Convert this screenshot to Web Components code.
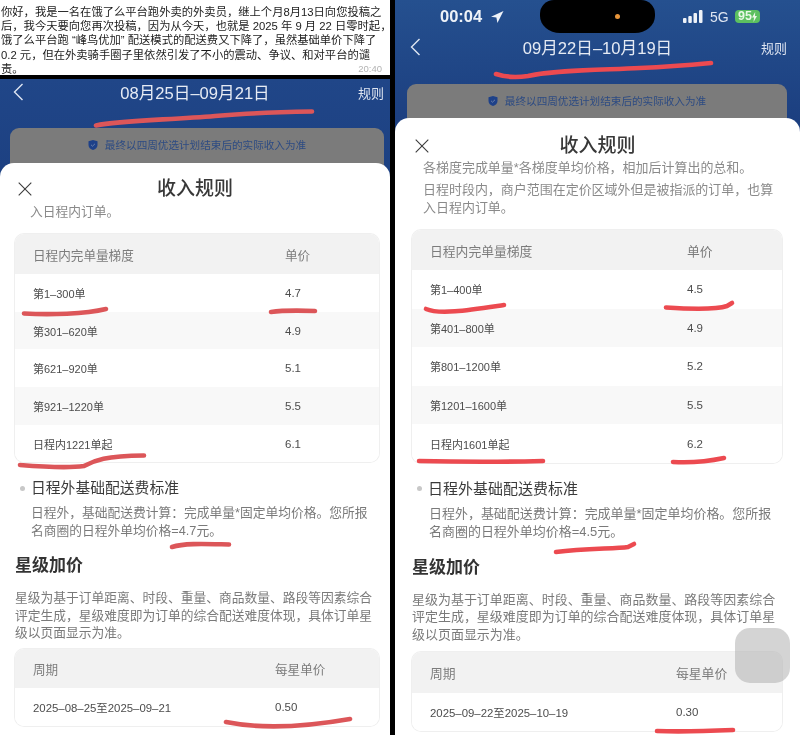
<!doctype html>
<html lang="zh">
<head>
<meta charset="utf-8">
<title>收入规则</title>
<style>
  html, body { margin: 0; background: #000; }
  body {
    width: 800px; height: 735px; overflow: hidden;
    display: grid; grid-template-columns: 390px 405px; gap: 5px;
    font-family: "Liberation Sans", "Noto Sans CJK SC", sans-serif;
  }
  .col { display: flex; flex-direction: column; height: 735px; min-width: 0; filter: blur(.35px); }
  /* each shot has its own scale, so spacing is set per panel */
  #left { --body: 12.75px; --th: 12.6px; --td: 11px; --h3: 14.8px; --pad-l: 15px; --pad-r: 11px; --x-l: 18px; --back-l: 13px; --rules-r: 6px; --banner-l: 10px; --banner-r: 6px; --ink: #dc5659; --top-blue: #204688; }
  #right { --body: 12.97px; --th: 12.8px; --td: 11px; --h3: 15px; --pad-l: 17px; --pad-r: 18px; --x-l: 20px; --back-l: 15px; --rules-r: 13px; --banner-l: 12px; --banner-r: 13px; --ink: #ec4a50; --top-blue: #25508f; }
  rule-table rule-row[head] { --h: 40px; }
  .date { --td: 11.4px; }
</style>
</head>
<body>

<div class="col" id="left">
  <note-card time="20:40">
    你好，我是一名在饿了么平台跑外卖的外卖员，继上个月8月13日向您投稿之<br>
    后，我今天要向您再次投稿，因为从今天，也就是 2025 年 9 月 22 日零时起，<br>
    饿了么平台跑 “峰鸟优加” 配送模式的配送费又下降了，虽然基础单价下降了<br>
    0.2 元，但在外卖骑手圈子里依然引发了不小的震动、争议、和对平台的谴<br>
    <span slot="last">责。</span>
  </note-card>
  <rule-phone style="--banner-top:23px;--banner-h:50px;--sheet-pad:14px">
    <app-header style="--title:16.600px">08月25日–09月21日</app-header>
    <notice-banner>最终以四周优选计划结束后的实际收入为准</notice-banner>
    <rule-sheet>
      <rule-para style="margin:2px 0 0 15px;--lh:17px;color:#8a8a8a">入日程内订单。</rule-para>
      <rule-table style="margin-top:14px;--col:270px">
        <rule-row head><span>日程内完单量梯度</span><span>单价</span></rule-row>
        <rule-row><span>第1–300单</span><span>4.7</span></rule-row>
        <rule-row><span>第301–620单</span><span>4.9</span></rule-row>
        <rule-row><span>第621–920单</span><span>5.1</span></rule-row>
        <rule-row><span>第921–1220单</span><span>5.5</span></rule-row>
        <rule-row><span>日程内1221单起</span><span>6.1</span></rule-row>
      </rule-table>
      <bullet-title style="margin:16px 0 0 5px">日程外基础配送费标准</bullet-title>
      <rule-para style="margin:6px 0 0 16px;--lh:17.3px">日程外，基础配送费计算：完成单量*固定单均价格。您所报<br>名商圈的日程外单均价格=4.7元。</rule-para>
      <section-title style="margin-top:15px">星级加价</section-title>
      <rule-para style="margin-top:11px;--lh:17.5px">星级为基于订单距离、时段、重量、商品数量、路段等因素综合<br>评定生成，星级难度即为订单的综合配送难度体现，具体订单星<br>级以页面显示为准。</rule-para>
      <rule-table class="date" style="margin-top:7.5px;--col:260px">
        <rule-row head style="--h:39px"><span>周期</span><span>每星单价</span></rule-row>
        <rule-row style="--h:38px"><span>2025–08–25至2025–09–21</span><span>0.50</span></rule-row>
      </rule-table>
    </rule-sheet>
    <ink-marks slot="over" view="0 79 390 656" d="M96 125.500C120 120 170 120 215 116C250 113 285 112 312 111.500|M24 313.500C50 315 85 314 106 309|M271 312C285 310 300 310.500 315 311|M20 465C45 467 70 468 84 466C95 460 105 456 144 455.500|M172 547C185 543 205 544 229 544.500|M226 722C265 730 310 726 350 719"></ink-marks>
  </rule-phone>
</div>

<div class="col" id="right">
  <rule-phone style="--banner-top:24px;--banner-h:49px;--sheet-pad:16px">
    <status-bar></status-bar>
    <app-header style="--title:16.600px;margin-top:1px">09月22日–10月19日</app-header>
    <notice-banner>最终以四周优选计划结束后的实际收入为准</notice-banner>
    <rule-sheet>
      <rule-para style="margin:1px 0 0 11px;--lh:18px;color:#8a8a8a">各梯度完成单量*各梯度单均价格，相加后计算出的总和。</rule-para>
      <rule-para style="margin:4px 0 0 11px;--lh:18px;color:#8a8a8a">日程时段内，商户范围在定价区域外但是被指派的订单，也算<br>入日程内订单。</rule-para>
      <rule-table style="margin-top:13px;--col:275px">
        <rule-row head><span>日程内完单量梯度</span><span>单价</span></rule-row>
        <rule-row style="--h:38.600px"><span>第1–400单</span><span>4.5</span></rule-row>
        <rule-row style="--h:38.600px"><span>第401–800单</span><span>4.9</span></rule-row>
        <rule-row style="--h:38.600px"><span>第801–1200单</span><span>5.2</span></rule-row>
        <rule-row style="--h:38.600px"><span>第1201–1600单</span><span>5.5</span></rule-row>
        <rule-row style="--h:38.600px"><span>日程内1601单起</span><span>6.2</span></rule-row>
      </rule-table>
      <bullet-title style="margin:16px 0 0 5px">日程外基础配送费标准</bullet-title>
      <rule-para style="margin:6px 0 0 17px;--lh:18px">日程外，基础配送费计算：完成单量*固定单均价格。您所报<br>名商圈的日程外单均价格=4.5元。</rule-para>
      <section-title style="margin-top:15px">星级加价</section-title>
      <rule-para style="margin-top:11px;--lh:17.5px">星级为基于订单距离、时段、重量、商品数量、路段等因素综合<br>评定生成，星级难度即为订单的综合配送难度体现，具体订单星<br>级以页面显示为准。</rule-para>
      <rule-table class="date" style="margin-top:8.500px;--col:264px">
        <rule-row head style="--h:41px"><span>周期</span><span>每星单价</span></rule-row>
        <rule-row style="--h:38px"><span>2025–09–22至2025–10–19</span><span>0.30</span></rule-row>
      </rule-table>
    </rule-sheet>
    <ink-marks slot="over" view="395 0 405 735" d="M496 74C505 77 515 78 528 76C555 70 600 70 640 68C665 67 690 65 711 63|M426 309C440 315 470 310 504 305|M666 307.500C690 309 715 310 727 306L732 303|M419 461C460 462 505 462 543 461|M673 462C690 463 710 461 724 458|M556 552C585 548 615 549 628 547L634 544|M657 731C680 732 710 731 733 730"></ink-marks>
    <float-button slot="over"></float-button>
  </rule-phone>
</div>

<script>
// chat bubble on top of the left shot
class NoteCard extends HTMLElement {
  constructor() {
    super();
    this.attachShadow({ mode: 'open' }).innerHTML = `
      <style>
        :host { display: block; height: 75px; margin-bottom: 4px; background: #fff; color: #1c1c1c; font-size: 11.300px; line-height: 14.200px; white-space: nowrap; overflow: hidden; box-sizing: border-box; padding: 5px 0 0 1px; }
        .last { display: flex; justify-content: space-between; padding-right: 8px; }
        .time { color: #b4b4b4; font-size: 9.500px; }
      </style>
      <slot></slot>
      <div class="last"><slot name="last"></slot><span class="time">${this.getAttribute('time')}</span></div>`;
  }
}

// blue app screen; "over" slot is for things floating above the page
class RulePhone extends HTMLElement {
  constructor() {
    super();
    this.attachShadow({ mode: 'open' }).innerHTML = `
      <style>
        :host { display: flex; flex-direction: column; flex: 1; min-height: 0; position: relative; overflow: hidden; background: linear-gradient(var(--top-blue), #1c3f80 120px); }
      </style>
      <slot></slot>
      <slot name="over"></slot>`;
  }
}

class StatusBar extends HTMLElement {
  constructor() {
    super();
    this.attachShadow({ mode: 'open' }).innerHTML = `
      <style>
        :host { display: flex; align-items: center; height: 33px; color: #eef2f8; position: relative; }
        .time { margin-left: 45px; font-size: 16.500px; font-weight: 700; width: 50px; }
        .island { margin-left: 36px; width: 115px; height: 33px; margin-top: -1px; background: #000; border-radius: 14px 14px 20px 20px / 14px 14px 17px 17px; display: flex; align-items: center; }
        .dot { width: 5px; height: 5px; margin-left: 75px; border-radius: 50%; background: #e8953a; }
        .bars { margin-left: 28px; }
        .net { margin-left: 7px; font-size: 14px; color: #dfe6f2; width: 18px; }
        .batt { margin-left: 7px; width: 25px; height: 13px; border-radius: 4px; background: #5cc060; color: #e9f7e6; font-size: 12.500px; font-weight: 700; line-height: 13px; display: flex; align-items: center; justify-content: center; }
      </style>
      <span class="time">00:04</span>
      <svg width="14" height="14" viewBox="0 0 14 14"><path d="M13.500 1L1 6.800L6.400 7.500L7.400 13Z" fill="#eef2f8"/></svg>
      <div class="island"><span class="dot"></span></div>
      <svg class="bars" width="20" height="13" viewBox="0 0 20 13" fill="#eef2f8"><rect x="0" y="8" width="3.500" height="5" rx="1"/><rect x="5.300" y="6" width="3.500" height="7" rx="1"/><rect x="10.500" y="3" width="3.500" height="10" rx="1"/><rect x="16" y="0" width="3.500" height="13" rx="1"/></svg>
      <span class="net">5G</span>
      <span class="batt">95<svg width="5" height="10" viewBox="0 0 5 10"><path d="M3.200 0L0 5.600H2L1.500 10L5 4H3Z" fill="#e9f7e6"/></svg></span>`;
  }
}

class AppHeader extends HTMLElement {
  constructor() {
    super();
    this.attachShadow({ mode: 'open' }).innerHTML = `
      <style>
        :host { display: grid; grid-template-columns: 1fr auto 1fr; align-items: center; height: 26px; color: #e6ebf4; flex: none; }
        .back { margin-left: var(--back-l); display: block; }
        .title { font-size: var(--title, 17px); white-space: nowrap; }
        .rules { justify-self: end; margin-right: var(--rules-r); font-size: 13px; color: #dde4f0; }
      </style>
      <svg class="back" width="11" height="18" viewBox="0 0 11 18"><path d="M9.500 1L1.500 9L9.500 17" fill="none" stroke="#dfe6f2" stroke-width="1.400"/></svg>
      <span class="title"><slot></slot></span>
      <span class="rules">规则</span>`;
  }
}

class NoticeBanner extends HTMLElement {
  constructor() {
    super();
    this.attachShadow({ mode: 'open' }).innerHTML = `
      <style>
        :host { display: flex; justify-content: center; gap: 7px; align-items: flex-start; flex: none; box-sizing: border-box; height: var(--banner-h); margin: var(--banner-top) var(--banner-r) 0 var(--banner-l); padding-top: 10px; border-radius: 9px 9px 0 0; background: #7b7b7b; color: #2d4b83; font-size: 10.600px; line-height: 14px; }
        svg { margin-top: 2px; }
      </style>
      <svg width="10" height="10" viewBox="0 0 10 10"><path d="M5 0L9.500 1.300V5C9.500 7.500 7.500 9.200 5 10C2.500 9.200 .5 7.500 .5 5V1.300Z" fill="#1e4189"/><path d="M3 4.800L4.500 6.200L7 3.800" fill="none" stroke="#7b8cb0" stroke-width=".8"/></svg>
      <span><slot></slot></span>`;
  }
}

// white bottom sheet with the close cross and title
class RuleSheet extends HTMLElement {
  constructor() {
    super();
    this.attachShadow({ mode: 'open' }).innerHTML = `
      <style>
        :host { display: block; flex: 1; min-height: 0; margin-top: -15px; background: #fff; border-radius: 14px 14px 0 0; overflow: hidden; color: #777; }
        .top { display: grid; grid-template-columns: 1fr auto 1fr; align-items: center; height: 24px; padding-top: var(--sheet-pad); }
        .top svg { margin-left: var(--x-l); display: block; }
        h2 { margin: 0; font-size: 19px; font-weight: 500; color: #383838; line-height: 24px; }
        .body { padding: 0 var(--pad-r) 0 var(--pad-l); }
      </style>
      <div class="top">
        <svg width="14" height="14" viewBox="0 0 14 14"><path d="M.7 .7L13.300 13.300M13.300 .7L.7 13.300" stroke="#3c3c3c" stroke-width="1.100" fill="none"/></svg>
        <h2>收入规则</h2>
      </div>
      <div class="body"><slot></slot></div>`;
  }
}

class RulePara extends HTMLElement {
  constructor() {
    super();
    this.attachShadow({ mode: 'open' }).innerHTML = `
      <style>
        :host { display: block; font-size: var(--body); line-height: var(--lh, 17.5px); white-space: nowrap; color: #7a7a7a; }
      </style>
      <slot></slot>`;
  }
}

class SectionTitle extends HTMLElement {
  constructor() {
    super();
    this.attachShadow({ mode: 'open' }).innerHTML = `
      <style>
        :host { display: block; font-size: 17px; line-height: 24px; font-weight: 700; color: #333; }
      </style>
      <slot></slot>`;
  }
}

class BulletTitle extends HTMLElement {
  constructor() {
    super();
    this.attachShadow({ mode: 'open' }).innerHTML = `
      <style>
        :host { display: flex; align-items: center; gap: 6px; font-size: var(--h3); line-height: 20px; color: #3a3a3a; }
        i { width: 5px; height: 5px; border-radius: 50%; background: #c8c8c8; }
      </style>
      <i></i><span><slot></slot></span>`;
  }
}

class RuleTable extends HTMLElement {
  constructor() {
    super();
    this.attachShadow({ mode: 'open' }).innerHTML = `
      <style>
        :host { display: block; border-radius: 9px; overflow: hidden; box-shadow: 0 0 0 1px #efefef; }
      </style>
      <slot></slot>`;
  }
}

class RuleRow extends HTMLElement {
  constructor() {
    super();
    this.attachShadow({ mode: 'open' }).innerHTML = `
      <style>
        :host { display: grid; grid-template-columns: calc(var(--col) - 18px) 1fr; align-items: center; height: var(--h, 37.700px); padding-left: 18px; background: #fff; font-size: var(--td); color: #4c4c4c; }
        :host(:nth-child(odd)) { background: #f8f8f8; }
        :host([head]) { background: #f2f2f2; font-size: var(--th); color: #7c7c7c; }
        ::slotted(span:last-child) { font-size: 11.500px; }
        :host([head]) ::slotted(span:last-child) { font-size: var(--th); }
      </style>
      <slot></slot>`;
  }
}

// hand-drawn red underlines, path data separated by |
class InkMarks extends HTMLElement {
  constructor() {
    super();
    const paths = this.getAttribute('d').split('|').map((d) => `<path d="${d}"/>`).join('');
    this.attachShadow({ mode: 'open' }).innerHTML = `
      <style>
        :host { position: absolute; inset: 0; display: block; pointer-events: none; }
        svg { display: block; width: 100%; height: 100%; }
      </style>
      <svg viewBox="${this.getAttribute('view')}" fill="none" stroke="var(--ink)" stroke-width="4.600" stroke-linecap="round" stroke-linejoin="round">${paths}</svg>`;
  }
}

// the iOS assistive touch square
class FloatButton extends HTMLElement {
  constructor() {
    super();
    this.attachShadow({ mode: 'open' }).innerHTML = `
      <style>
        :host { position: absolute; left: 340px; top: 628px; width: 55px; height: 55px; border-radius: 15px; background: rgba(170,170,170,.5); }
      </style>`;
  }
}

customElements.define('note-card', NoteCard);
customElements.define('rule-phone', RulePhone);
customElements.define('status-bar', StatusBar);
customElements.define('app-header', AppHeader);
customElements.define('notice-banner', NoticeBanner);
customElements.define('rule-sheet', RuleSheet);
customElements.define('rule-para', RulePara);
customElements.define('section-title', SectionTitle);
customElements.define('bullet-title', BulletTitle);
customElements.define('rule-table', RuleTable);
customElements.define('rule-row', RuleRow);
customElements.define('ink-marks', InkMarks);
customElements.define('float-button', FloatButton);
</script>
</body>
</html>
